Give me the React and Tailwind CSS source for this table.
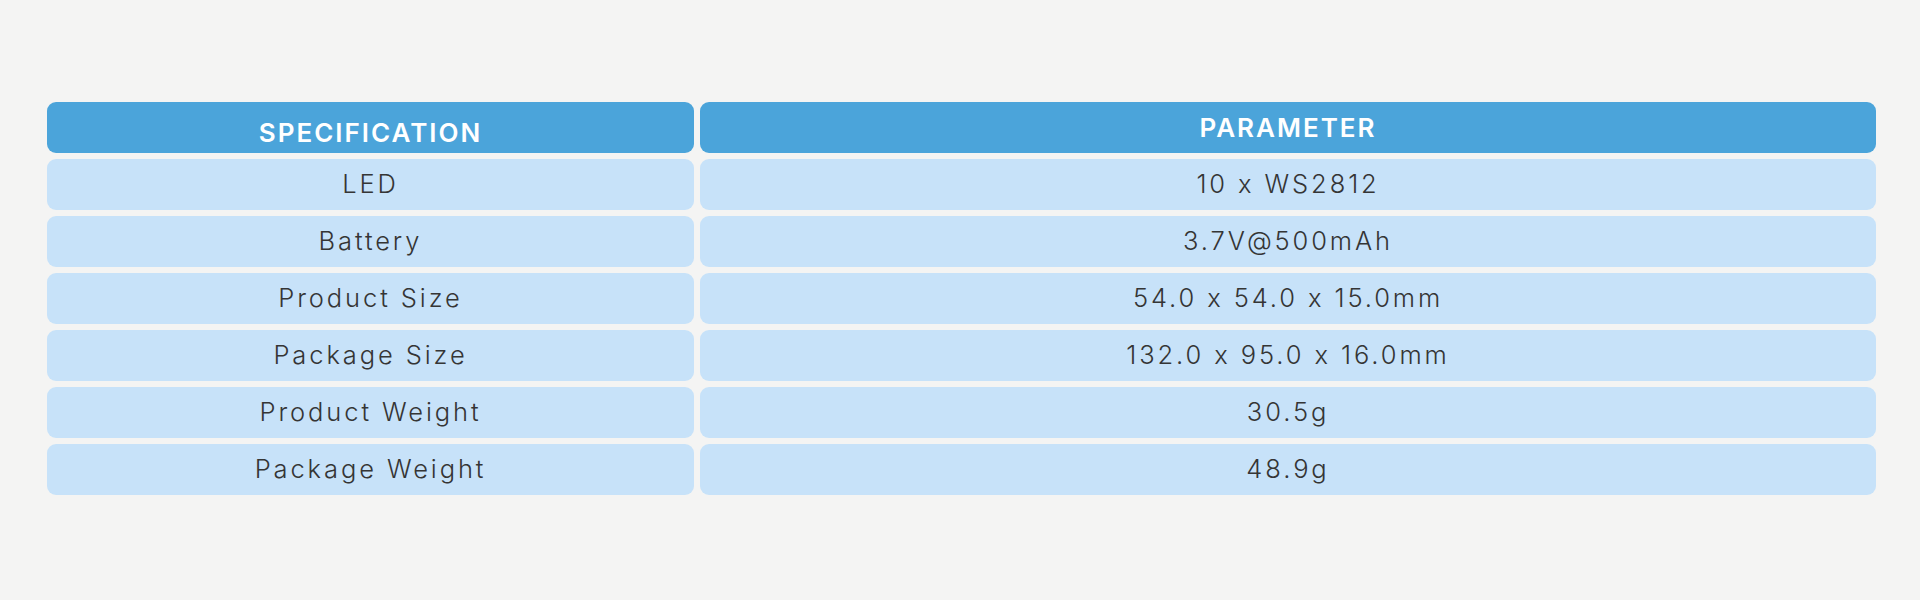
import React from 'react';

const rows = [
  ['LED', '10 x WS2812'],
  ['Battery', '3.7V@500mAh'],
  ['Product Size', '54.0 x 54.0 x 15.0mm'],
  ['Package Size', '132.0 x 95.0 x 16.0mm'],
  ['Product Weight', '30.5g'],
  ['Package Weight', '48.9g'],
];

export default function App() {
  return (
    <div className="w-[1920px] h-[600px] bg-[#f4f4f3] pt-[102px] pl-[47px] pr-[44px] font-['Inter','Liberation_Sans',sans-serif]">
      {/* header */}
      <div className="grid grid-cols-[647px_1fr] gap-[6px]">
        <div className="h-[51px] rounded-[9px] bg-[#4ba4da] text-white text-[26px] font-semibold tracking-[2px] flex items-center justify-center pt-[10px]">
          SPECIFICATION
        </div>
        <div className="h-[51px] rounded-[9px] bg-[#4ba4da] text-white text-[26px] font-semibold tracking-[2px] flex items-center justify-center">
          PARAMETER
        </div>
      </div>

      {/* rows */}
      <div className="mt-[6px] flex flex-col gap-[6px]">
        {rows.map(([spec, param]) => (
          <div key={spec} className="grid grid-cols-[647px_1fr] gap-[6px] text-[25.5px] font-light tracking-[2.9px] text-[#353535]">
            <div className="h-[51px] rounded-[9px] bg-[#c7e2f9] flex items-center justify-center">{spec}</div>
            <div className="h-[51px] rounded-[9px] bg-[#c7e2f9] flex items-center justify-center">{param}</div>
          </div>
        ))}
      </div>
    </div>
  );
}
